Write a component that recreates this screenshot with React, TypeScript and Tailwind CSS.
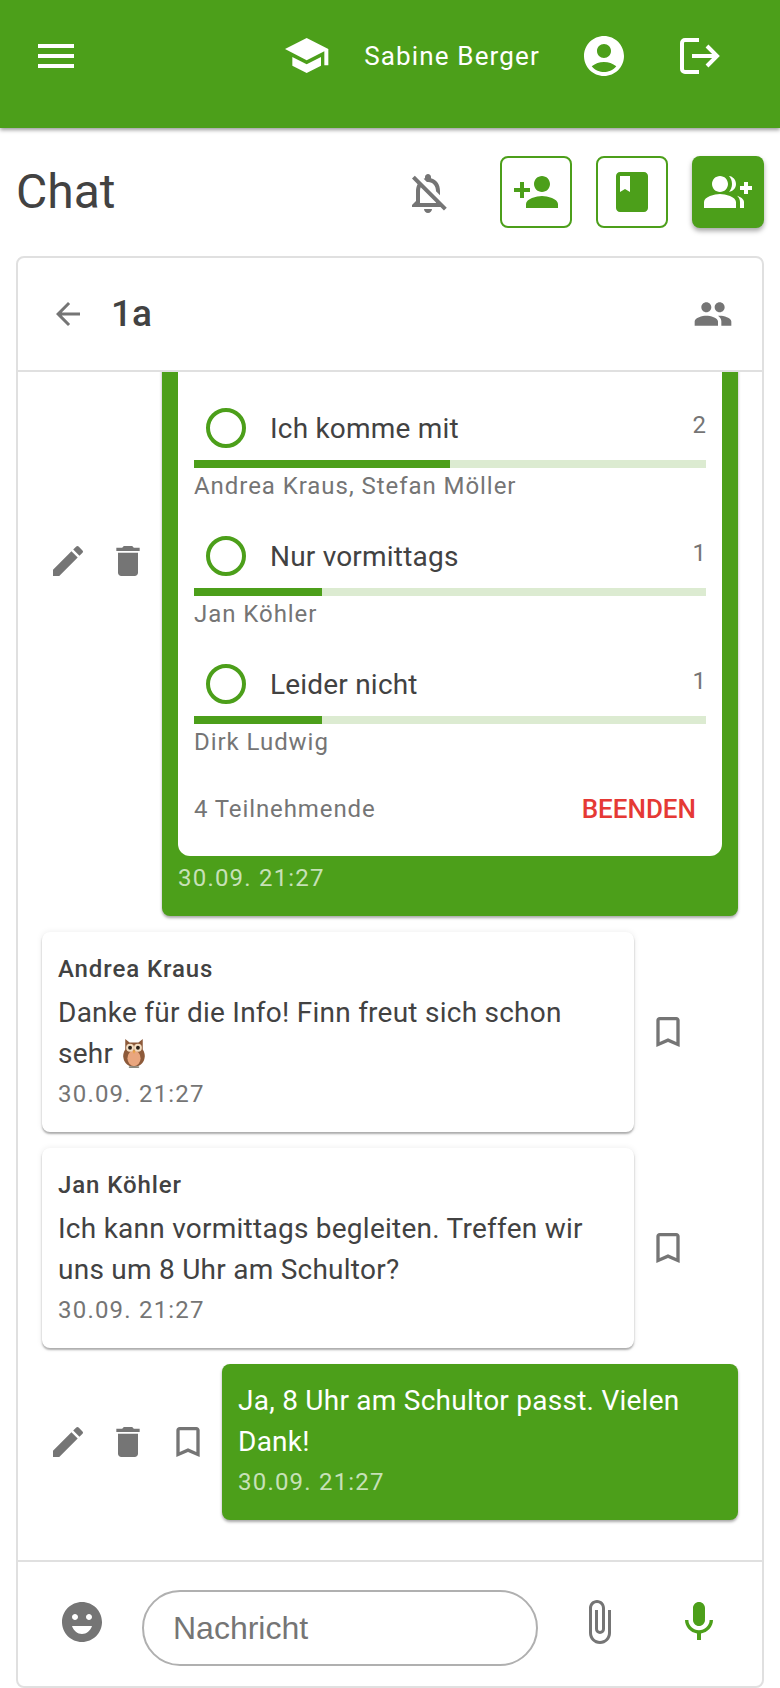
import { MdMenu, MdAccountCircle, MdOutlineNotificationsOff, MdPersonAdd, MdBook, MdGroupAdd, MdArrowBack, MdPeople, MdEdit, MdDelete, MdBookmarkBorder, MdEmojiEmotions, MdAttachFile, MdMic } from "react-icons/md";

const Owl = () => (
  <svg viewBox="0 0 32 36" className="inline-block w-[28px] h-[32px] align-[-6px]">
    <path d="M6 2l5 4h10l5-4v12c2 3 3 7 2 10-1 6-6 10-12 10S5 30 4 24c-1-3 0-7 2-10z" fill="#8d5a3a" />
    <ellipse cx="16" cy="24" rx="7.5" ry="9" fill="#e9a67e" />
    <circle cx="11.5" cy="12" r="4.5" fill="#f3dcc0" />
    <circle cx="20.5" cy="12" r="4.5" fill="#f3dcc0" />
    <circle cx="11.5" cy="12" r="2.2" fill="#2b2118" />
    <circle cx="20.5" cy="12" r="2.2" fill="#2b2118" />
    <path d="M14.5 15h3L16 19z" fill="#e8a33c" />
    <rect x="10" y="33" width="12" height="2" rx="1" fill="#8a8a80" />
  </svg>
);

const Hat = () => (
  <svg viewBox="50 55 132 105" className="w-[44px] h-[35px] mt-[2px]" fill="white">
    <path d="M50 88L115 55L180 88L180 137L168 137L168 95L115 122Z" />
    <path d="M72 112L115 134L158 112V138L115 160L72 138Z" />
  </svg>
);

const LogoutIcon = () => (
  <svg viewBox="0 0 40 36" className="w-[40px] h-[36px] ml-[52px] mr-[60px] mt-[2px]" fill="none" stroke="white" strokeWidth="4">
    <path d="M19 2H5a3 3 0 0 0-3 3v26a3 3 0 0 0 3 3h14" />
    <path d="M12 18H36M27 8l10 10-10 10" />
  </svg>
);

const Stamp = ({ light }: { light?: boolean }) => (
  <div className={`text-[24px] leading-[32px] tracking-[1.2px] ${light ? "text-white/70" : "text-[#757575]"}`}>30.09. 21:27</div>
);

const Option = ({ label, count, pct, voters }: { label: string; count: number; pct: string; voters: string }) => (
  <div className="h-[128px] flex flex-col">
    <div className="flex items-center h-[64px] relative">
      <div className="ml-[12px] w-[40px] h-[40px] rounded-full border-[4px] border-[#4c9f1a]" />
      <div className="ml-[24px] mt-[2px] text-[28px] text-[#424242] tracking-[0.2px]">{label}</div>
      <div className="absolute right-0 top-[11px] text-[24px] text-[#757575]">{count}</div>
    </div>
    <div className="h-[8px] bg-[#dcebd1]"><div className={`h-full bg-[#4c9f1a] ${pct}`} /></div>
    <div className="text-[24px] leading-[36px] text-[#757575] tracking-[0.95px]">{voters}</div>
  </div>
);

const Incoming = ({ name, lines }: { name: string; lines: React.ReactNode }) => (
  <div className="flex items-center">
    <div className="w-[592px] rounded-[8px] bg-white px-[16px] pt-[21px] pb-[22px] shadow-[0_2px_2px_rgba(0,0,0,0.3),0_0_6px_rgba(0,0,0,0.08)]">
      <div className="text-[24px] leading-[32px] font-medium text-[#424242] tracking-[0.9px]">{name}</div>
      <div className="text-[28px] leading-[41px] text-[#424242] tracking-[0.25px] mt-[7px] mb-[4px]">{lines}</div>
      <Stamp />
    </div>
    <MdBookmarkBorder className="ml-[14px] text-[#757575]" size={40} />
  </div>
);

export default function App() {
  return (
    <div className="w-[780px] h-[1688px] bg-white flex flex-col overflow-hidden font-['Roboto',sans-serif]">
      <header className="h-[128px] shrink-0 bg-[#4c9f1a] shadow-[0_2px_4px_rgba(0,0,0,0.4)] z-10 flex items-start pt-[36px] text-white">
        <MdMenu size={48} className="ml-[32px] mt-[-4px]" />
        <div className="flex-1" />
        <Hat />
        <div className="ml-[35px] text-[26px] leading-[40px] tracking-[1.15px]">Sabine Berger</div>
        <MdAccountCircle size={48} className="ml-[40px] mt-[-4px]" />
        <LogoutIcon />
      </header>
      <div className="h-[128px] shrink-0 flex items-start pt-[28px] pl-[16px] pr-[16px]">
        <h1 className="text-[48px] leading-[68px] mt-[2px] text-[#424242]">Chat</h1>
        <div className="flex-1" />
        <MdOutlineNotificationsOff size={48} className="text-[#757575] mt-[13px]" />
        <div className="ml-[48px] w-[72px] h-[72px] rounded-[8px] border-2 border-[#4c9f1a] flex items-center justify-center text-[#4c9f1a]"><MdPersonAdd size={48} /></div>
        <div className="ml-[24px] w-[72px] h-[72px] rounded-[8px] border-2 border-[#4c9f1a] flex items-center justify-center text-[#4c9f1a]"><MdBook size={48} /></div>
        <div className="ml-[24px] w-[72px] h-[72px] rounded-[8px] bg-[#4c9f1a] shadow-[0_3px_5px_rgba(0,0,0,0.35)] flex items-center justify-center text-white"><MdGroupAdd size={48} /></div>
      </div>
      <main className="mx-[16px] flex-1 min-h-0 border-2 border-[#e0e0e0] rounded-[8px] flex flex-col overflow-hidden">
        <div className="h-[114px] shrink-0 border-b-2 border-[#e0e0e0] flex items-center pl-[32px] pr-[29px]">
          <MdArrowBack size={36} className="text-[#757575]" />
          <div className="ml-[25px] text-[37px] font-medium text-[#424242]">1a</div>
          <div className="flex-1" />
          <MdPeople size={40} className="text-[#757575]" />
        </div>
        <div className="flex-1 min-h-0 overflow-hidden flex flex-col justify-end pb-[40px]">
          <div className="flex items-center shrink-0">
            <div className="w-[144px] pl-[30px] flex items-center shrink-0 text-[#757575]">
              <MdEdit size={40} />
              <MdDelete size={40} className="ml-[20px]" />
            </div>
            <div className="w-[576px] rounded-[8px] bg-[#4c9f1a] px-[16px] shadow-[0_2px_3px_rgba(0,0,0,0.35)]">
              <div className="bg-white rounded-b-[12px] px-[16px] pt-[190px]">
                <Option label="Ich komme mit" count={2} pct="w-1/2" voters="Andrea Kraus, Stefan Möller" />
                <Option label="Nur vormittags" count={1} pct="w-1/4" voters="Jan Köhler" />
                <Option label="Leider nicht" count={1} pct="w-1/4" voters="Dirk Ludwig" />
                <div className="flex justify-between items-center h-[76px] pb-[18px] pr-[10px]">
                  <span className="text-[24px] text-[#757575] tracking-[0.9px]">4 Teilnehmende</span>
                  <span className="text-[26px] font-medium text-[#e53935]">BEENDEN</span>
                </div>
              </div>
              <div className="pt-[6px] pb-[22px]"><Stamp light /></div>
            </div>
          </div>
          <div className="pl-[24px] pt-[16px] flex flex-col gap-[16px] shrink-0">
            <Incoming name="Andrea Kraus" lines={<>Danke für die Info! Finn freut sich schon<br />sehr <Owl /></>} />
            <Incoming name="Jan Köhler" lines={<>Ich kann vormittags begleiten. Treffen wir<br />uns um 8 Uhr am Schultor?</>} />
          </div>
          <div className="flex items-center justify-end mt-[16px] shrink-0">
            <div className="flex items-center text-[#757575] mr-[14px]">
              <MdEdit size={40} />
              <MdDelete size={40} className="ml-[20px]" />
              <MdBookmarkBorder size={40} className="ml-[20px]" />
            </div>
            <div className="w-[516px] mr-[24px] rounded-[8px] bg-[#4c9f1a] text-white px-[16px] pt-[16px] pb-[22px] shadow-[0_2px_3px_rgba(0,0,0,0.35)]">
              <div className="text-[28px] leading-[41px] tracking-[0.25px] mb-[4px]">Ja, 8 Uhr am Schultor passt. Vielen<br />Dank!</div>
              <Stamp light />
            </div>
          </div>
        </div>
        <div className="h-[126px] shrink-0 border-t-2 border-[#e0e0e0] flex items-center pl-[40px]">
          <MdEmojiEmotions size={48} className="text-[#757575] mt-[-4px]" />
          <div className="ml-[36px] mt-[8px] w-[396px] h-[76px] rounded-full border-2 border-[#b0b0b0] flex items-center pl-[29px] font-['Liberation_Sans',sans-serif] text-[32px] text-[#757575]">Nachricht</div>
          <MdAttachFile size={48} className="ml-[37px] mt-[-4px] text-[#757575]" />
          <MdMic size={48} className="ml-[52px] mt-[-4px] text-[#4c9f1a]" />
        </div>
      </main>
    </div>
  );
}
